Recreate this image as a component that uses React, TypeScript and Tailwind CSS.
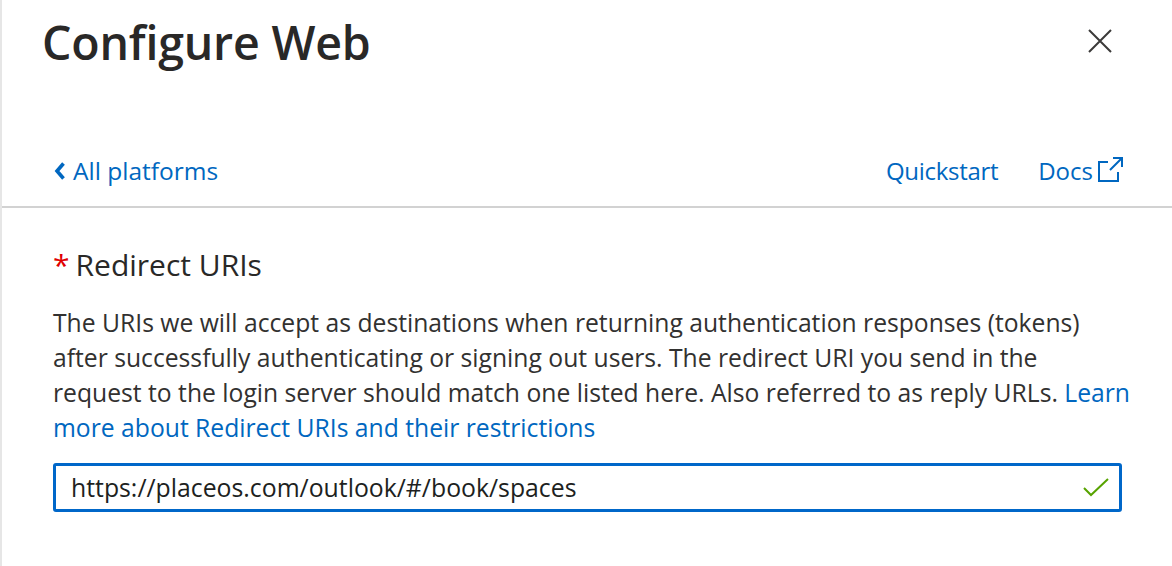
import React from "react";

const font = { fontFamily: '"Open Sans", "Noto Sans", sans-serif' };

export default function App() {
  return (
    <div
      className="w-[1172px] h-[566px] bg-white border-l-2 border-[#e6e6e6] overflow-hidden text-[#323130]"
      style={font}
    >
      <div className="flex items-start justify-between pl-[40px] pr-[58px] pt-[12px] h-[131px]">
        <h1 className="text-[46.5px] leading-[60px] font-semibold text-[#292827] tracking-[-0.2px]">
          Configure Web
        </h1>
        <button className="mt-[15px] w-[28px] h-[28px] flex items-center justify-center">
          <svg width="26" height="26" viewBox="0 0 26 26" fill="none" stroke="#3b3a39" strokeWidth="2">
            <path d="M2 2 L24 24 M24 2 L2 24" />
          </svg>
        </button>
      </div>
      <div className="flex items-center justify-between pl-[51px] pr-[48px] pt-[5px] h-[77px] border-b-2 border-[#d2d2d2]">
        <a className="flex items-center text-[24.5px] text-[#0067c0]">
          <svg width="14" height="22" viewBox="0 0 14 22" className="mr-[6px]">
            <path d="M10.5 3.5 L4 11 L10.5 18.5" fill="none" stroke="#0067c0" strokeWidth="3.6" />
          </svg>
          All platforms
        </a>
        <div className="flex items-center gap-[40px] text-[24px] text-[#0067c0]">
          <a className="tracking-[-0.3px]">Quickstart</a>
          <a className="flex items-center">
            Docs
            <svg width="28" height="28" viewBox="0 0 28 28" fill="none" stroke="#0067c0" strokeWidth="2" className="ml-[3px] -mt-[2px]">
              <path d="M12 6 H3 V25 H22 V16" />
              <path d="M14 14 L26 2 M17 2 H26 V11" />
            </svg>
          </a>
        </div>
      </div>
      <div className="pl-[51px] pr-[50px] pt-[36px]">
        <div className="flex items-center text-[30px] leading-[42px] text-[#292827]">
          <span className="text-[#e00000] mr-[6px] text-[30px]">*</span>
          Redirect URIs
        </div>
        <p className="mt-[19px] text-[24.7px] leading-[35px] text-[#323130] whitespace-nowrap">
          The URIs we will accept as destinations when returning authentication responses (tokens)
          <br />
          after successfully authenticating or signing out users. The redirect URI you send in the
          <br />
          request to the login server should match one listed here. Also referred to as reply URLs.{" "}
          <a className="text-[#0067c0]">Learn</a>
          <br />
          <a className="text-[#0067c0]">more about Redirect URIs and their restrictions</a>
        </p>
        <div className="mt-[18px] h-[49px] border-[3px] border-[#0067c9] rounded-[3px] flex items-center justify-between pl-[15px] pr-[10px]">
          <span className="text-[24.8px] text-[#201f1e]">https://placeos.com/outlook/#/book/spaces</span>
          <svg width="26" height="20" viewBox="0 0 26 20" fill="none" stroke="#57a300" strokeWidth="2">
            <path d="M1 10 L8 17 L25 1" />
          </svg>
        </div>
      </div>
    </div>
  );
}
